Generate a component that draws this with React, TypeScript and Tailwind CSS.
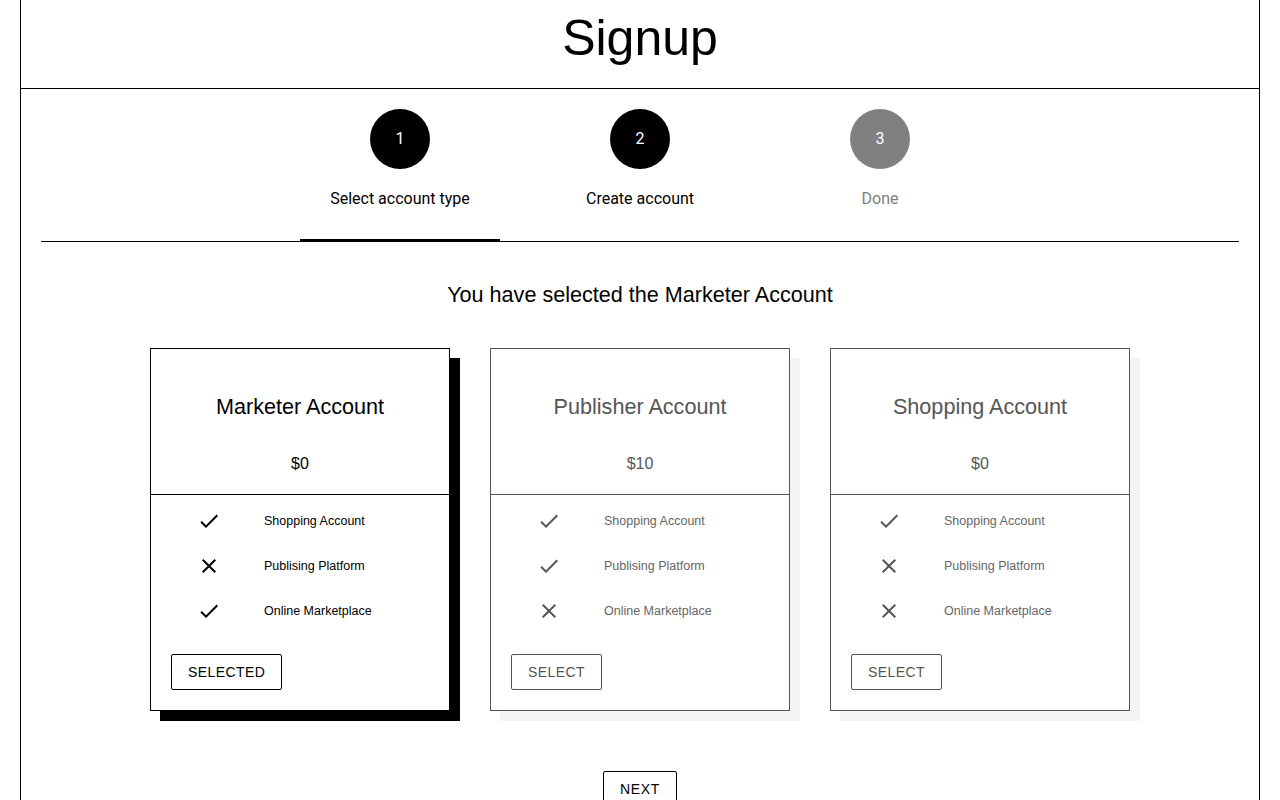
import { useState } from "react";

type Plan = {
  id: string;
  title: string;
  price: string;
  features: { label: string; included: boolean }[];
};

const plans: Plan[] = [
  {
    id: "marketer",
    title: "Marketer Account",
    price: "$0",
    features: [
      { label: "Shopping Account", included: true },
      { label: "Publising Platform", included: false },
      { label: "Online Marketplace", included: true },
    ],
  },
  {
    id: "publisher",
    title: "Publisher Account",
    price: "$10",
    features: [
      { label: "Shopping Account", included: true },
      { label: "Publising Platform", included: true },
      { label: "Online Marketplace", included: false },
    ],
  },
  {
    id: "shopping",
    title: "Shopping Account",
    price: "$0",
    features: [
      { label: "Shopping Account", included: true },
      { label: "Publising Platform", included: false },
      { label: "Online Marketplace", included: false },
    ],
  },
];

const steps = [
  { n: 1, label: "Select account type", done: true },
  { n: 2, label: "Create account", done: true },
  { n: 3, label: "Done", done: false },
];

function CheckIcon() {
  return (
    <svg width="24" height="24" viewBox="0 0 24 24" fill="currentColor">
      <path d="M9 16.17L4.83 12l-1.42 1.41L9 19 21 7l-1.41-1.41z" />
    </svg>
  );
}

function CloseIcon() {
  return (
    <svg width="24" height="24" viewBox="0 0 24 24" fill="currentColor">
      <path d="M19 6.41L17.59 5 12 10.59 6.41 5 5 6.41 10.59 12 5 17.59 6.41 19 12 13.41 17.59 19 19 17.59 13.41 12z" />
    </svg>
  );
}

function PlanCard({ plan, selected, onSelect }: { plan: Plan; selected: boolean; onSelect: () => void }) {
  const tone = selected ? "text-black border-black" : "text-[#555] border-[#555]";
  return (
    <div
      className={`w-[300px] h-[363px] flex flex-col bg-white border ${tone} ${
        selected ? "shadow-[10px_10px_0_0_#000]" : "shadow-[10px_10px_0_0_#f4f4f4]"
      }`}
    >
      <div className={`flex flex-col items-center pt-[46px] pb-[20px] border-b ${tone}`}>
        <div className="text-[21.6px] leading-6">{plan.title}</div>
        <div className="mt-[35px] text-[16px] leading-5">{plan.price}</div>
      </div>
      <div className="pt-[3px]">
        {plan.features.map((f) => (
          <div key={f.label} className="h-[45px] flex items-center pl-[46px]">
            <span className="w-6 h-6 flex">{f.included ? <CheckIcon /> : <CloseIcon />}</span>
            <span className={`ml-[43px] pt-[2px] text-[12.5px] ${selected ? "text-black" : "text-[#666]"}`}>
              {f.label}
            </span>
          </div>
        ))}
      </div>
      <div className="pl-[20px] mt-[21px]">
        <button
          onClick={onSelect}
          className={`h-[36px] px-[16px] border rounded-[2px] text-[14px] uppercase tracking-[0.03em] ${tone}`}
        >
          {selected ? "Selected" : "Select"}
        </button>
      </div>
    </div>
  );
}

export default function App() {
  const [selected, setSelected] = useState("marketer");
  const current = plans.find((p) => p.id === selected)!;

  return (
    <div className="min-h-screen bg-white" style={{ fontFamily: '"Liberation Sans", Arial, sans-serif' }}>
      <div className="mx-[20px] border-x border-black min-h-[820px]">
        <div className="h-[89px] border-b border-black flex items-start justify-center">
          <h1 className="text-[50px] leading-[76px] text-black">Signup</h1>
        </div>

        <div className="px-5">
          <div className="flex justify-center gap-10 border-b border-black">
            {steps.map((s, i) => (
              <div
                key={s.n}
                className={`w-[200px] h-[152px] flex flex-col items-center pt-5 ${
                  i === 0 ? "border-b-2 border-black" : ""
                }`}
                style={{ fontFamily: "Roboto, sans-serif" }}
              >
                <div
                  className={`w-[60px] h-[60px] rounded-full flex items-center justify-center text-white text-[16px] ${
                    s.done ? "bg-black" : "bg-[#808080]"
                  }`}
                >
                  {s.n}
                </div>
                <div className={`mt-[18px] text-[16px] leading-6 ${s.done ? "text-black" : "text-[#808080]"}`}>
                  {s.label}
                </div>
              </div>
            ))}
          </div>
        </div>

        <div className="mt-[41px] text-center text-[21.6px] leading-6 text-black">
          You have selected the {current.title}
        </div>

        <div className="mt-[41px] flex justify-center gap-10">
          {plans.map((p) => (
            <PlanCard key={p.id} plan={p} selected={p.id === selected} onSelect={() => setSelected(p.id)} />
          ))}
        </div>

        <div className="mt-[60px] flex justify-center">
          <button className="h-[36px] px-[16px] border border-black rounded-[2px] text-[14px] uppercase tracking-[0.05em] text-black">
            Next
          </button>
        </div>
      </div>
    </div>
  );
}
